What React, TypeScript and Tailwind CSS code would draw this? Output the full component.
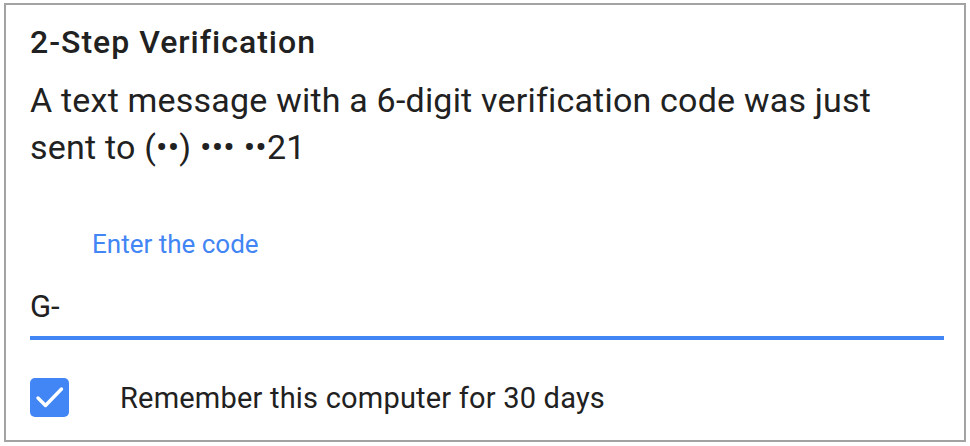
export default function App() {
  return (
    <div className="w-[970px] h-[446px] bg-white pl-[4px] pt-[3px]" style={{ fontFamily: "Roboto, 'Liberation Sans', sans-serif" }}>
      <div className="w-[962px] h-[439px] border-2 border-[#a3a3a3] pl-[24px] pr-[20px] flex flex-col">
        <h1 className="text-[32px] font-medium text-[#212121] leading-[36px] tracking-[1px] mt-[19px]">2-Step Verification</h1>
        <p className="text-[34px] text-[#212121] leading-[47px] tracking-[0.2px] mt-[17px] max-w-[880px]">
          A text message with a 6-digit verification code was just sent to (••) ••• ••21
        </p>
        <div className="pl-[62px] mt-[58px] text-[26px] leading-[30px] text-[#4285f4]">Enter the code</div>
        <div className="mt-[30px] text-[31px] leading-[36px] text-[#212121]">G-</div>
        <div className="mt-[11px] h-[4px] bg-[#4285f4]" />
        <label className="mt-[38px] flex items-center">
          <span className="w-[39px] h-[39px] rounded-[5px] bg-[#4285f4] block">
            <svg width="39" height="39" viewBox="0 0 39 39" fill="none" stroke="white" strokeWidth="3.4" strokeLinecap="round" strokeLinejoin="round">
              <path d="M8 20l7.5 7.5L31.5 11" />
            </svg>
          </span>
          <span className="ml-[51px] text-[29px] leading-[34px] tracking-[0.2px] text-[#212121]">Remember this computer for 30 days</span>
        </label>
      </div>
    </div>
  );
}
